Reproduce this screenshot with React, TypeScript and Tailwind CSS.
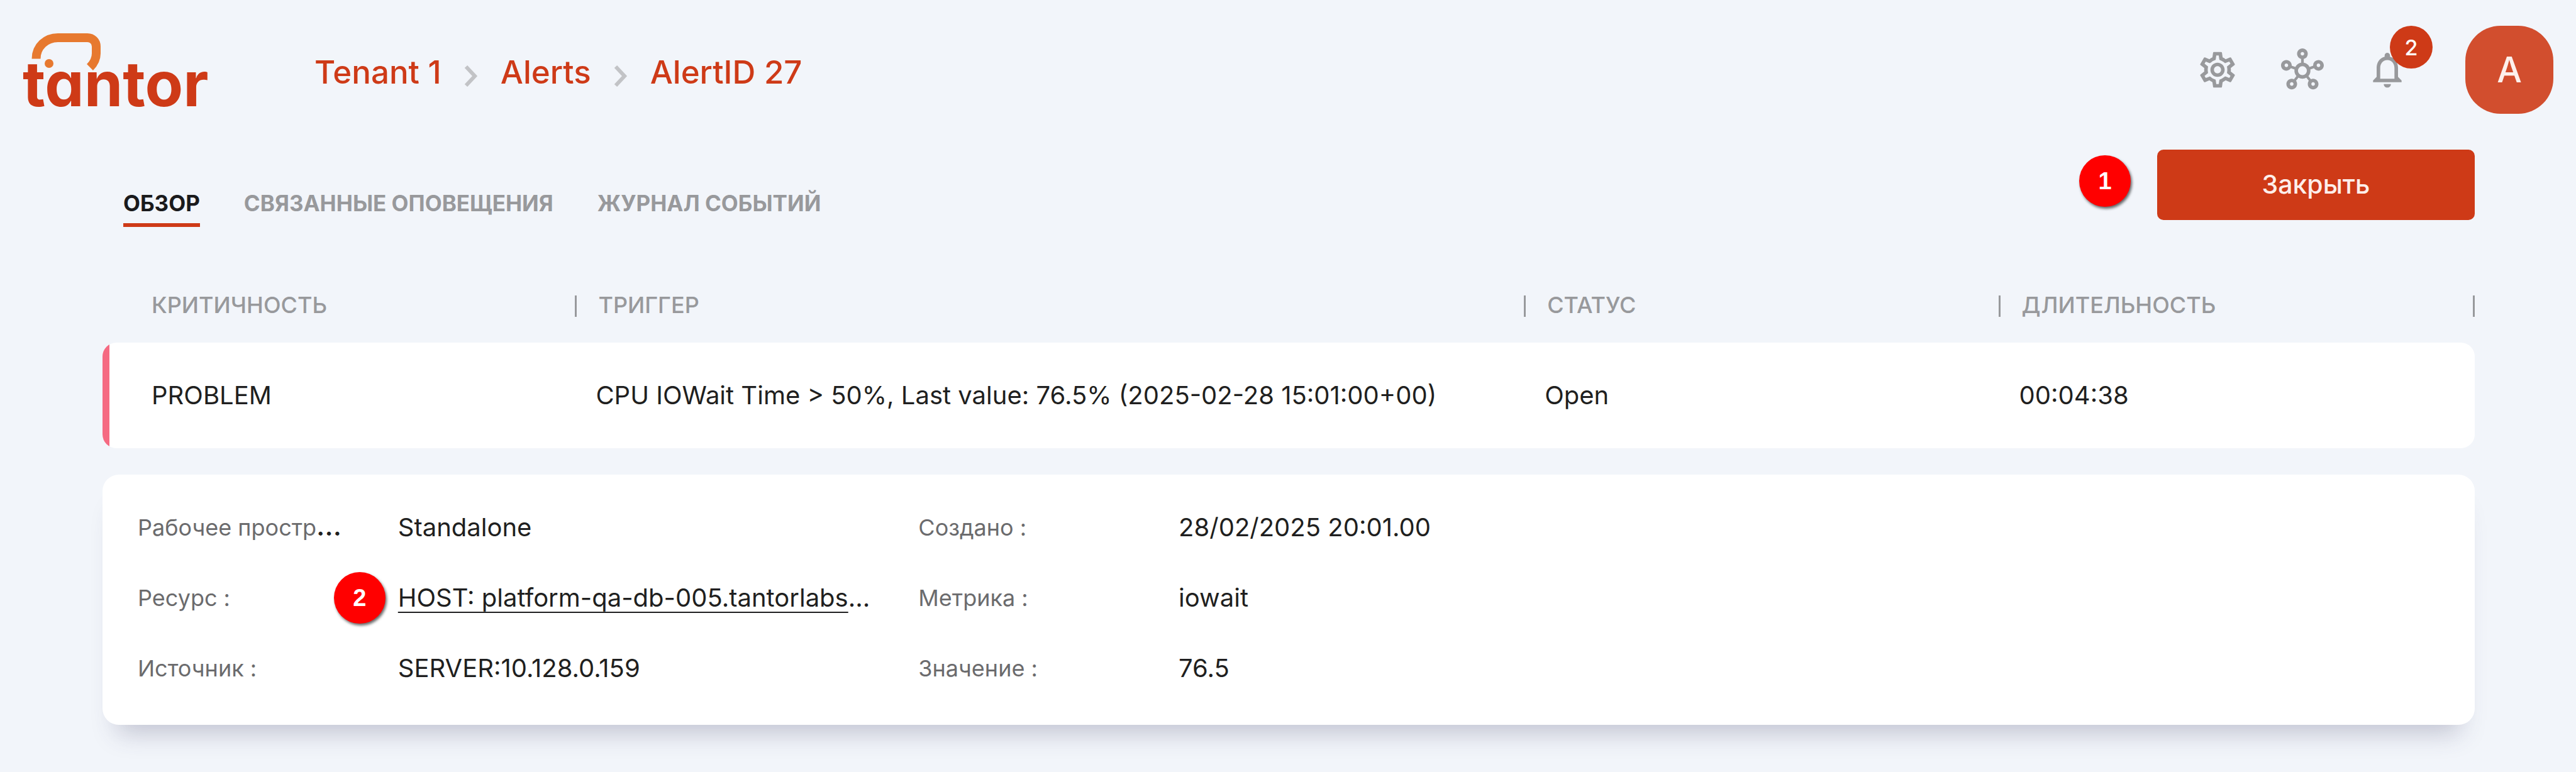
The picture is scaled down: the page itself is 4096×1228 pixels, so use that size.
import type { ReactNode } from "react";
import { MdNotificationsNone, MdOutlineHub, MdOutlineSettings } from "react-icons/md";

const crumbs = ["Tenant 1", "Alerts", "AlertID 27"];

const tabs = ["ОБЗОР", "СВЯЗАННЫЕ ОПОВЕЩЕНИЯ", "ЖУРНАЛ СОБЫТИЙ"];

const columns = [
    { title: "КРИТИЧНОСТЬ", width: "w-1/5", value: "PROBLEM" },
    { title: "ТРИГГЕР", width: "w-2/5", value: "CPU IOWait Time > 50%, Last value: 76.5% (2025-02-28 15:01:00+00)" },
    { title: "СТАТУС", width: "w-1/5", value: "Open" },
    { title: "ДЛИТЕЛЬНОСТЬ", width: "w-1/5", value: "00:04:38" },
];

function Logo() {
    return (
        <a href="#home" className="relative block w-[320px] pt-11 text-[#ce3a17]">
            <span className="block text-[99px] leading-none font-bold [font-feature-settings:'cv11']">tantor</span>
            {/* elephant head and eye over the wordmark */}
            <svg viewBox="0 0 130 80" className="absolute top-2 left-0 h-[80px] w-[130px]">
                <path
                    d="M21.5 45.5 C21.5 26 37 12 56 12 H103 C111 12 117 18 117 26 V37 C117 46 114 52 107 59"
                    fill="none"
                    stroke="#e7792f"
                    strokeWidth="14"
                />
                <circle cx="42" cy="53" r="7" fill="#e7792f" />
            </svg>
        </a>
    );
}

function ChevronIcon() {
    return (
        <svg viewBox="0 0 22 34" className="mt-3 h-[34px] w-[22px]" fill="none" stroke="#c2c3c6" strokeWidth="6">
            <path d="M3 2 L17 17 L3 32" />
        </svg>
    );
}

function Marker({ children }: { children: ReactNode }) {
    return (
        <span className="flex size-[82px] items-center justify-center rounded-full bg-[#ff0000] font-['Liberation_Sans',sans-serif] text-[38px] font-bold text-white shadow-[2px_3px_4px_rgba(0,0,0,0.6)]">
            {children}
        </span>
    );
}

function Header() {
    return (
        <header className="flex h-[222px] items-center px-9">
            <Logo />
            <nav className="ml-[144px] flex items-center pt-2 text-[51px] font-medium text-[#ce3a17]">
                {crumbs.map((crumb, i) => (
                    <span key={crumb} className="flex items-center">
                        {i > 0 && (
                            <span className="mx-9">
                                <ChevronIcon />
                            </span>
                        )}
                        <a href="#crumb">{crumb}</a>
                    </span>
                ))}
            </nav>
            <div className="ml-auto flex items-center text-[#98999c]">
                <button aria-label="Settings" className="mr-[67px]">
                    <MdOutlineSettings className="size-[68px]" />
                </button>
                <button aria-label="Topology" className="mr-[67px]">
                    <MdOutlineHub className="size-[68px]" />
                </button>
                <button aria-label="Notifications" className="relative mr-[90px]">
                    <MdNotificationsNone className="size-[68px]" />
                    <span className="absolute -top-9 left-[38px] flex size-[68px] items-center justify-center rounded-full bg-[#ce3a17] text-[34px] font-medium text-white">
                        2
                    </span>
                </button>
                <button className="size-[140px] rounded-[56px] bg-[#d24e2e] text-[56px] font-medium text-[#fdf0ec]">A</button>
            </div>
        </header>
    );
}

function Toolbar() {
    return (
        <div className="flex h-[128px] items-end pt-4">
            <div role="tablist" className="mb-[-11px] flex gap-[70px] pl-[33px]">
                {tabs.map((tab, i) => (
                    <button
                        key={tab}
                        role="tab"
                        aria-selected={i === 0}
                        className={
                            i === 0
                                ? "border-b-[6px] border-[#ce3a17] pb-1.5 text-[35px] font-bold text-[#1a1a1c]"
                                : "border-b-[6px] border-transparent pb-1.5 text-[35px] font-bold text-[#98999c]"
                        }
                    >
                        {tab}
                    </button>
                ))}
            </div>
            <div className="ml-auto flex h-[112px] items-center gap-[42px]">
                <div className="mb-3">
                    <Marker>1</Marker>
                </div>
                <button className="h-[112px] w-[505px] rounded-[10px] bg-[#ce3a17] text-[41px] font-medium text-[#fdeeea]">
                    Закрыть
                </button>
            </div>
        </div>
    );
}

function AlertTable() {
    return (
        <table className="mt-[109px] w-full table-fixed border-separate border-spacing-0 text-left">
            <thead>
                <tr>
                    {columns.map((col, i) => (
                        <th key={col.title} className={`${col.width} p-0 pb-[34px] font-medium`}>
                            <div
                                className={`flex h-[52px] items-center justify-between text-[36px] text-[#98999c] ${i === 0 ? "pl-[78px]" : "pl-[34px]"}`}
                            >
                                {col.title}
                                <span className="mt-1 h-[34px] w-[3px] bg-[#98999c]" />
                            </div>
                        </th>
                    ))}
                </tr>
            </thead>
            <tbody>
                <tr className="text-[40px] text-[#1f1f20]">
                    {columns.map((col, i) => (
                        <td
                            key={col.title}
                            className={`h-[168px] bg-white p-0 whitespace-nowrap first:rounded-l-[22px] last:rounded-r-[22px] ${i === 0 ? "" : "pl-[30px]"}`}
                        >
                            {i === 0 ? (
                                <div className="flex h-[168px] items-center overflow-hidden rounded-l-[22px]">
                                    <span className="mr-[67px] h-full w-[11px] bg-[#f56a82]" />
                                    {col.value}
                                </div>
                            ) : (
                                col.value
                            )}
                        </td>
                    ))}
                </tr>
            </tbody>
        </table>
    );
}

function Label({ children }: { children: ReactNode }) {
    return <dt className="px-8 text-[36px] whitespace-nowrap text-[#6b6b6d]">{children}</dt>;
}

function Value({ children }: { children: ReactNode }) {
    return <dd className="relative col-span-2 px-8 whitespace-nowrap">{children}</dd>;
}

function Details() {
    return (
        <section className="mt-[42px] rounded-[26px] bg-white px-6 pt-7 pb-[34px] shadow-[0_36px_40px_-24px_rgba(60,60,100,0.28)]">
            {/* the last third of the grid stays empty */}
            <dl className="grid w-2/3 auto-rows-[112px] grid-cols-6 items-center text-[40px] text-[#1f1f20]">
                <Label>
                    Рабочее простр<span className="text-[44px] leading-none font-medium text-[#1f1f20]">…</span>
                </Label>
                <Value>Standalone</Value>
                <Label>Создано :</Label>
                <Value>28/02/2025 20:01.00</Value>
                <Label>Ресурс :</Label>
                <Value>
                    <a href="#host" className="underline decoration-2 underline-offset-8">
                        HOST: platform-qa-db-005.tantorlabs
                    </a>
                    …
                    <div className="absolute top-1/2 -left-[70px] -translate-y-1/2">
                        <Marker>2</Marker>
                    </div>
                </Value>
                <Label>Метрика :</Label>
                <Value>iowait</Value>
                <Label>Источник :</Label>
                <Value>SERVER:10.128.0.159</Value>
                <Label>Значение :</Label>
                <Value>76.5</Value>
            </dl>
        </section>
    );
}

export default function App() {
    return (
        <div className="min-h-screen bg-[#f2f5fa] font-['Inter',sans-serif]">
            <Header />
            <main className="pr-[161px] pb-[74px] pl-[163px]">
                <Toolbar />
                <AlertTable />
                <Details />
            </main>
        </div>
    );
}
